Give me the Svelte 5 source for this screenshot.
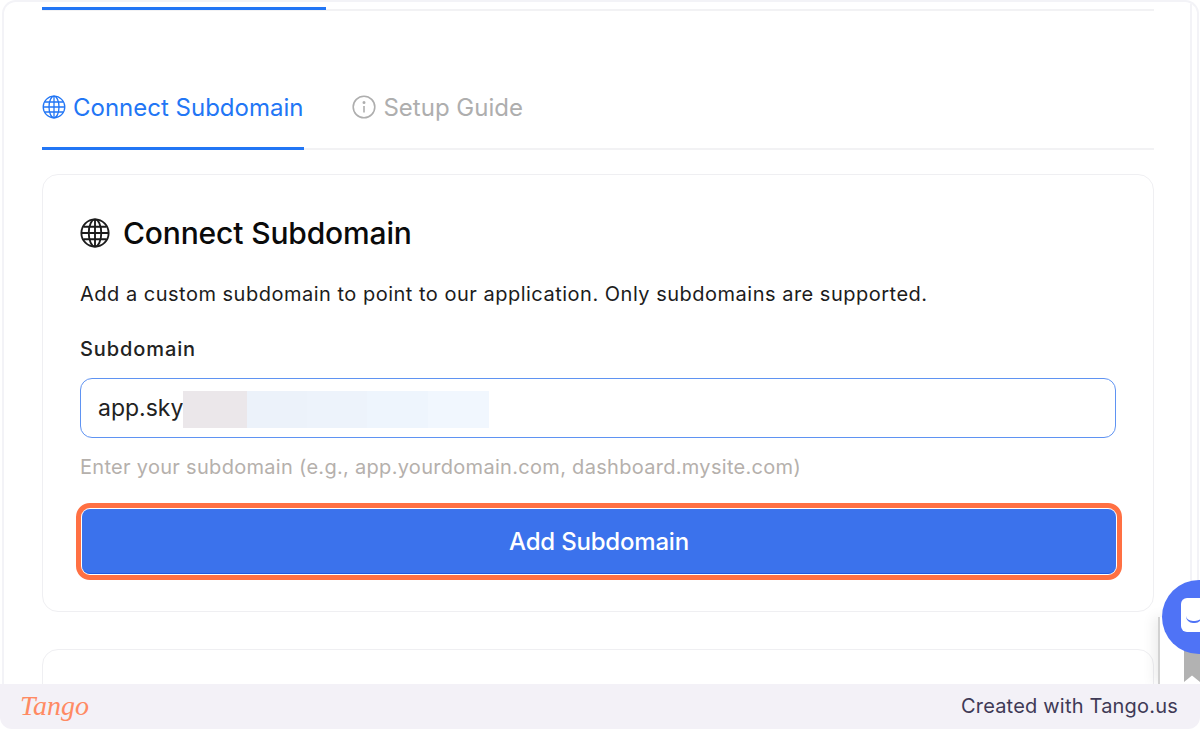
<script>
  const blurBlocks = [
    { width: 64, color: '#ebe7ea' },
    { width: 60, color: '#ecf2fa' },
    { width: 60, color: '#edf3fb' },
    { width: 61, color: '#eef5fd' },
    { width: 61, color: '#f1f7fe' }
  ];
</script>

<div class="page">
  <main class="panel">
    <div class="scroll">
      <div class="topbar"><span class="topbar-active"></span></div>

      <nav class="tabs">
        <div class="tab active">
          <svg class="icon" viewBox="0 0 24 24" fill="none" stroke="currentColor" stroke-width="1.3">
            <circle cx="12" cy="12" r="10.8" />
            <ellipse cx="12" cy="12" rx="5" ry="10.8" />
            <path d="M12 1.2v21.6M1.2 12h21.6M2.8 7h18.4M2.8 17h18.4" />
          </svg>
          <span>Connect Subdomain</span>
        </div>
        <div class="tab muted">
          <svg class="icon" viewBox="0 0 24 24" fill="none" stroke="currentColor" stroke-width="1.6">
            <circle cx="12" cy="12" r="10.8" />
            <path d="M12 11v6.5" />
            <circle cx="12" cy="7.4" r="0.7" fill="currentColor" />
          </svg>
          <span>Setup Guide</span>
        </div>
      </nav>

      <section class="card">
        <h2>
          <svg class="title-icon" viewBox="0 0 24 24" fill="none" stroke="currentColor" stroke-width="1.5">
            <circle cx="12" cy="12" r="10.9" />
            <ellipse cx="12" cy="12" rx="5" ry="10.9" />
            <path d="M12 1.1v21.8M1.1 12h21.8M2.8 7h18.4M2.8 17h18.4" />
          </svg>
          <span>Connect Subdomain</span>
        </h2>
        <p class="lead">Add a custom subdomain to point to our application. Only subdomains are supported.</p>
        <div class="label">Subdomain</div>
        <div class="input">
          <span>app.sky</span>
          <span class="blur">
            {#each blurBlocks as block}
              <i style="width: {block.width}px; background: {block.color}"></i>
            {/each}
          </span>
        </div>
        <p class="help">Enter your subdomain (e.g., app.yourdomain.com, dashboard.mysite.com)</p>
        <button class="submit">Add Subdomain</button>
      </section>

      <section class="card second"></section>
    </div>
  </main>

  <div class="chat" aria-hidden="true">
    <div class="chat-edge"></div>
    <div class="chat-ribbon"></div>
    <div class="chat-bubble">
      <div class="chat-face"><span class="chat-smile"></span></div>
    </div>
  </div>

  <footer>
    <span class="logo">Tango</span>
    <span class="credit">Created with Tango.us</span>
  </footer>
</div>

<style>
  :global(body) {
    margin: 0;
    background: #fff;
  }

  .page {
    position: relative;
    display: flex;
    flex-direction: column;
    width: 1200px;
    height: 729px;
    overflow: hidden;
    font-family: "Inter", "Noto Sans", sans-serif;
    color: #0f0f0f;
  }

  .panel {
    flex: 1;
    min-height: 0;
    overflow: hidden;
    margin: 0 1px 0 2px;
    border: 2px solid #f3f3f7;
    border-bottom: none;
    border-radius: 14px 14px 0 0;
    box-sizing: border-box;
  }

  .scroll {
    height: 100%;
    margin-right: 5px;
    padding: 7px 36px 0 38px;
    border-right: 2px solid #f3f3f7;
    box-sizing: border-box;
  }

  .topbar {
    height: 2px;
    margin-bottom: 80px;
    background: #f2f2f4;
  }

  .topbar-active {
    display: block;
    position: relative;
    top: -2px;
    width: 284px;
    height: 3px;
    background: #2276f5;
  }

  .tabs {
    display: flex;
    gap: 48px;
    height: 57px;
    border-bottom: 2px solid #f2f2f4;
    box-sizing: content-box;
  }

  .tab {
    display: flex;
    align-items: flex-start;
    gap: 7px;
    height: 58px;
    box-sizing: border-box;
    padding-top: 1px;
    font-size: 24px;
    line-height: 32px;
  }

  .tab.active {
    color: #2276f5;
    border-bottom: 3px solid #2276f5;
    height: 59px;
    padding-right: 1px;
  }

  .tab.muted {
    color: #aeaeae;
  }

  .icon {
    width: 24px;
    height: 24px;
    margin-top: 3px;
  }

  .card {
    margin-top: 24px;
    height: 438px;
    padding: 38px 37px 0;
    border: 1px solid #efeff2;
    border-radius: 16px;
    box-sizing: border-box;
  }

  .card.second {
    margin-top: 37px;
    height: 60px;
    padding: 0;
  }

  h2 {
    display: flex;
    align-items: center;
    gap: 13px;
    margin: 0;
    height: 40px;
    font-size: 30px;
    line-height: 40px;
    font-weight: 500;
    letter-spacing: -0.15px;
    color: #0a0a0a;
  }

  .title-icon {
    width: 30px;
    height: 30px;
    color: #1c1c1c;
  }

  .lead {
    margin: 27px 0 0;
    font-size: 20px;
    line-height: 28px;
    letter-spacing: 0.5px;
    color: #1c1c1c;
  }

  .label {
    margin-top: 27px;
    font-size: 20px;
    line-height: 28px;
    font-weight: 500;
    letter-spacing: 0.9px;
    color: #222;
  }

  .input {
    display: flex;
    align-items: center;
    margin-top: 15px;
    height: 60px;
    padding: 0 17px;
    border: 1px solid #5f93f2;
    border-radius: 12px;
    box-sizing: border-box;
    font-size: 23px;
    color: #222;
  }

  .blur {
    display: flex;
    height: 37px;
    margin-top: 2px;
  }

  .blur i {
    display: block;
  }

  .help {
    margin: 15px 0 0;
    font-size: 20px;
    line-height: 28px;
    letter-spacing: 0.3px;
    color: #b5b0ac;
  }

  .submit {
    display: block;
    width: 1034px;
    height: 65px;
    margin: 28px 0 0 2px;
    border: none;
    border-bottom: 1px solid #1f5ae0;
    border-radius: 8px;
    outline: 5px solid #ff7043;
    outline-offset: 1px;
    background: #3b72ec;
    color: #fff;
    font-family: inherit;
    font-size: 24px;
    font-weight: 500;
    letter-spacing: -0.2px;
  }

  .chat {
    position: absolute;
    left: 1140px;
    top: 570px;
    width: 60px;
    height: 114px;
    overflow: hidden;
  }

  .chat-edge {
    position: absolute;
    left: 18px;
    top: 47px;
    width: 42px;
    height: 67px;
    border-left: 2px solid #d2d2d2;
    background: #fff;
    box-shadow: -4px 0 12px rgba(0, 0, 0, 0.08);
  }

  .chat-ribbon {
    position: absolute;
    left: 44px;
    top: 80px;
    width: 16px;
    height: 32px;
    background: #b2b2b2;
    clip-path: polygon(0 0, 100% 0, 100% 100%, 50% 80%, 0 100%);
  }

  .chat-bubble {
    position: absolute;
    left: 22px;
    top: 10px;
    width: 74px;
    height: 74px;
    border-radius: 50%;
    background: #4f73f6;
  }

  .chat-face {
    position: absolute;
    left: 19px;
    top: 18px;
    width: 34px;
    height: 34px;
    border-radius: 6px;
    background: #fff;
  }

  .chat-smile {
    position: absolute;
    left: 5px;
    top: 18px;
    width: 16px;
    height: 5px;
    border-bottom: 2px solid #4f73f6;
    border-radius: 0 0 10px 10px;
  }

  footer {
    display: flex;
    flex: none;
    align-items: center;
    justify-content: space-between;
    height: 45px;
    padding: 0 22px 2px 20px;
    box-sizing: border-box;
    background: #f3f1f7;
    border-radius: 0 0 12px 12px;
  }

  .logo {
    font-family: "Liberation Serif", serif;
    font-style: italic;
    font-size: 28px;
    color: #ff8a63;
  }

  .credit {
    font-size: 20px;
    letter-spacing: 0.2px;
    color: #3f3a56;
  }
</style>
